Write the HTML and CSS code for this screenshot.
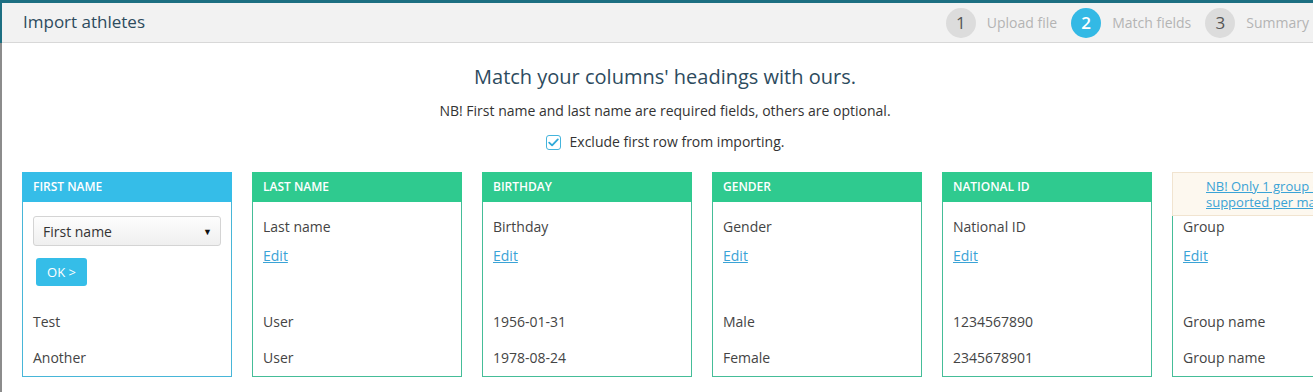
FILE: index.html
```html
<!DOCTYPE html>
<html lang="en">
<head>
  <meta charset="UTF-8" />
  <meta name="viewport" content="width=device-width, initial-scale=1.0" />
  <title>Import athletes</title>
  <link rel="stylesheet" href="styles.css">
</head>
<body>
  <div class="page">
    <div class="modal">
      <div class="modal-header">
        <div class="modal-title">Import athletes</div>
        <div class="steps">
          <div class="step"><span class="step-num">1</span><span class="step-label">Upload file</span></div>
          <div class="step active"><span class="step-num">2</span><span class="step-label">Match fields</span></div>
          <div class="step"><span class="step-num">3</span><span class="step-label">Summary</span></div>
        </div>
      </div>

      <div class="modal-body">
        <h2>Match your columns' headings with ours.</h2>
        <p class="note">NB! First name and last name are required fields, others are optional.</p>
        <label class="check">
          <span class="check-box">
            <svg width="11" height="9" viewBox="0 0 11 9"><path d="M1.2 4.6 L4.1 7.4 L9.8 1.4" fill="none" stroke="#2fa9d8" stroke-width="1.8" stroke-linecap="round" stroke-linejoin="round"/></svg>
          </span>
          Exclude first row from importing.
        </label>

        <div class="columns">
          <div class="col col-active">
            <div class="col-head">FIRST NAME</div>
            <div class="col-map map-select">
              <div class="select">First name <span class="caret">&#9660;</span></div>
              <button class="ok-btn">OK &gt;</button>
            </div>
            <div class="col-row">Test</div>
            <div class="col-row">Another</div>
          </div>

          <div class="col">
            <div class="col-head">LAST NAME</div>
            <div class="col-map">
              <div class="map-name">Last name</div>
              <a href="#" class="edit">Edit</a>
            </div>
            <div class="col-row">User</div>
            <div class="col-row">User</div>
          </div>

          <div class="col">
            <div class="col-head">BIRTHDAY</div>
            <div class="col-map">
              <div class="map-name">Birthday</div>
              <a href="#" class="edit">Edit</a>
            </div>
            <div class="col-row">1956-01-31</div>
            <div class="col-row">1978-08-24</div>
          </div>

          <div class="col">
            <div class="col-head">GENDER</div>
            <div class="col-map">
              <div class="map-name">Gender</div>
              <a href="#" class="edit">Edit</a>
            </div>
            <div class="col-row">Male</div>
            <div class="col-row">Female</div>
          </div>

          <div class="col">
            <div class="col-head">NATIONAL ID</div>
            <div class="col-map">
              <div class="map-name">National ID</div>
              <a href="#" class="edit">Edit</a>
            </div>
            <div class="col-row">1234567890</div>
            <div class="col-row">2345678901</div>
          </div>

          <div class="col col-group">
            <div class="col-notice"><a href="#">NB! Only 1 group column supported per mapping.</a></div>
            <div class="col-map">
              <div class="map-name">Group</div>
              <a href="#" class="edit">Edit</a>
            </div>
            <div class="col-row">Group name</div>
            <div class="col-row">Group name</div>
          </div>
        </div>
      </div>
    </div>
  </div>
</body>
</html>
```

FILE: styles.css
```css
body { margin: 0; padding: 0; font-family: "Open Sans", Arial, sans-serif; overflow: hidden; }
.page {
  height: 392px;
  padding: 3px 0 0 2px;
  box-sizing: border-box;
  overflow: hidden;
  background: linear-gradient(#1d6f82 0, #1d6f82 43px, #8c8c8c 43px);
}
.modal { background: #fff; height: 100%; width: 1326px; overflow: hidden; }

.modal-header {
  height: 39px;
  background: #f2f2f2;
  border-bottom: 1px solid #d8d8d8;
  display: flex;
  align-items: center;
  justify-content: space-between;
  padding: 0 19px 0 21px;
}
.modal-title { font-size: 17px; color: #2d4b5e; margin-top: -2px; }
.steps { display: flex; align-items: center; }
.step { display: flex; align-items: center; margin-left: 14px; }
.step-num {
  width: 30px; height: 30px; border-radius: 50%;
  background: #dcdcdc; color: #555;
  display: flex; align-items: center; justify-content: center;
  font-size: 17px;
}
.step-label { margin-left: 11px; font-size: 14px; color: #b4b4b4; }
.step.active .step-num { background: #33b9e5; color: #fff; font-weight: 600; }

.modal-body { padding: 20px 20px 0 20px; color: #444; }
h2 { margin: 0; font-size: 20px; font-weight: 400; line-height: 28px; text-align: center; color: #2d4b5e; }
.note { margin: 10px 0 0; font-size: 14px; line-height: 20px; text-align: center; color: #333; }
.check {
  display: flex; align-items: center; justify-content: center;
  margin-top: 11px; font-size: 14px; line-height: 20px; color: #333;
}
.check-box {
  width: 13px; height: 13px; border: 1px solid #44b4dc; border-radius: 3px;
  display: flex; align-items: center; justify-content: center;
  margin-right: 9px;
}

.columns { display: flex; align-items: flex-start; gap: 20px; margin-top: 20px; }
.col {
  flex: 0 0 210px; box-sizing: border-box;
  border: 1px solid #45bd98; border-top: none;
  font-size: 14px; color: #444;
}
.col-head {
  height: 30px; margin: 0 -1px; padding-left: 11px;
  background: #2fca8f; color: #fff;
  font-size: 12px; font-weight: 600; line-height: 30px;
}
.col-active { border-color: #48b6d8; }
.col-active .col-head { background: #35bde8; }

.col-map { height: 102px; box-sizing: border-box; padding: 15px 10px 0; }
.map-name { line-height: 20px; }
.edit { display: inline-block; margin-top: 9px; line-height: 20px; color: #3aa3d6; }
.col-row { height: 36px; line-height: 36px; padding: 0 10px; }

.map-select { padding-top: 15px; }
.select {
  height: 28px; border: 1px solid #d4d4d4; border-radius: 3px;
  background: linear-gradient(#fdfdfd, #efefef);
  display: flex; align-items: center; justify-content: space-between;
  padding: 0 8px 0 9px; color: #333; margin-top: -1px;
}
.caret { font-size: 9px; color: #111; }
.ok-btn {
  margin: 12px 0 0 3px; height: 28px; width: 51px;
  border: none; border-radius: 3px; background: #35bde8; color: #fff;
  font-family: "Open Sans", Arial, sans-serif; font-size: 13px; padding: 0;
}

.col-group .col-notice {
  height: 44px; box-sizing: border-box; margin: 0 -1px;
  padding: 5px 0 0 33px;
  background: #fdf8ef; border: 1px solid #f1e4d0;
  font-size: 13px; line-height: 16px; width: 210px;
}
.col-notice a { color: #3aa3d6; }
.col-group .col-map { height: 88px; padding-top: 1px; }
```
